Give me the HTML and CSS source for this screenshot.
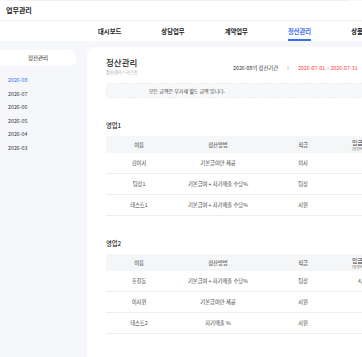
FILE: index.html
```html
<!DOCTYPE html>
<html>
<head>
<title>업무관리</title>
<link rel="stylesheet" href="styles.css">
</head>
<body>
    <div class="topline"></div>
    <div class="appbar">업무관리</div>
    <div class="tabs">
        <div class="tab"><span>대시보드</span></div>
        <div class="tab"><span>상담업무</span></div>
        <div class="tab"><span>계약업무</span></div>
        <div class="tab active"><span>정산관리</span></div>
        <div class="tab"><span>상품관리</span></div>
    </div>

    <div class="layout">
        <div class="sidebar">
            <div class="side-title">정산관리</div>
            <ul class="months">
                <li class="on">2026-08</li>
                <li>2026-07</li>
                <li>2026-06</li>
                <li>2026-05</li>
                <li>2026-04</li>
                <li>2026-03</li>
            </ul>
        </div>

        <div class="card">
            <div class="card-head">
                <div class="title-block">
                    <div class="title">정산관리</div>
                    <div class="crumb">정산관리 &gt; 리스트</div>
                </div>
                <div class="period">
                    2026-08의 정산기간
                    <span class="colon">:</span>
                    <span class="range">2026-07-01 ~ 2026-07-31</span>
                </div>
            </div>

            <div class="notice">모든 금액은 부가세 별도 금액 입니다.</div>

            <div class="group">
                <div class="group-name">영업1</div>
                <div class="row head">
                    <div>이름</div>
                    <div>정산방법</div>
                    <div>직급</div>
                    <div class="amt-head"><span>입금액</span><small>(일정비율)</small></div>
                </div>
                <div class="row">
                    <div>김이사</div>
                    <div>기본급여만 제공</div>
                    <div>이사</div>
                    <div class="amt"></div>
                </div>
                <div class="row">
                    <div>팀장1</div>
                    <div>기본급여 + 자기매출 수당%</div>
                    <div>팀장</div>
                    <div class="amt"></div>
                </div>
                <div class="row">
                    <div>테스트1</div>
                    <div>기본급여 + 자기매출 수당%</div>
                    <div>사원</div>
                    <div class="amt"></div>
                </div>
            </div>

            <div class="group">
                <div class="group-name">영업2</div>
                <div class="row head">
                    <div>이름</div>
                    <div>정산방법</div>
                    <div>직급</div>
                    <div class="amt-head"><span>입금액</span><small>(일정비율)</small></div>
                </div>
                <div class="row">
                    <div>홍길동</div>
                    <div>기본급여 + 자기매출 수당%</div>
                    <div>팀장</div>
                    <div class="amt">4,000,000</div>
                </div>
                <div class="row">
                    <div>이사원</div>
                    <div>기본급여만 제공</div>
                    <div>사원</div>
                    <div class="amt"></div>
                </div>
                <div class="row">
                    <div>테스트2</div>
                    <div>자기매출 %</div>
                    <div>사원</div>
                    <div class="amt"></div>
                </div>
            </div>
        </div>
    </div>
</body>
</html>
```

FILE: styles.css
```css
body {
    margin: 0;
    width: 460px;
    height: 357px;
    overflow: hidden;
    background-color: #f6f7fb;
    font-family: "Noto Sans CJK KR", "Noto Sans", sans-serif;
    color: #333;
}
.topline {
    height: 1px;
    margin-left: 18px;
    width: 329px;
    background-color: #eceef2;
}
.appbar {
    height: 19px;
    line-height: 19px;
    padding-left: 6px;
    font-size: 7px;
    font-weight: bold;
    color: #222;
    background-color: white;
    border-bottom: 1px solid #eef0f3;
}
.tabs {
    display: flex;
    height: 20px;
    padding-left: 78px;
    background-color: white;
}
.tab {
    flex: 0 0 63.3px;
    text-align: center;
    font-size: 6.3px;
    font-weight: bold;
    color: #222;
}
.tab span {
    display: inline-block;
    padding-top: 6px;
    line-height: 9px;
    padding-bottom: 3px;
    border-bottom: 2px solid transparent;
}
.tab.active {
    color: #3a6cf4;
}
.tab.active span {
    border-bottom-color: #3a6cf4;
}
.layout {
    display: flex;
}
.sidebar {
    flex: 0 0 87px;
    padding-top: 9px;
}
.side-title {
    width: 76px;
    height: 16px;
    line-height: 16px;
    background-color: white;
    border-radius: 0 6px 6px 0;
    text-align: center;
    font-size: 5.5px;
    color: #222;
}
.months {
    list-style: none;
    margin: 8px 0 0 0;
    padding: 0 0 0 8px;
}
.months li {
    height: 13.5px;
    line-height: 13.5px;
    font-size: 5.3px;
    color: #333;
}
.months li.on {
    color: #3a6cf4;
}
.card {
    flex: 1;
    margin-top: 6px;
    height: 400px;
    padding: 10px 0 0 19px;
    background-color: white;
    border-radius: 8px 0 0 0;
}
.card-head {
    display: flex;
}
.title-block {
    flex: 0 0 127px;
}
.title {
    font-size: 8.5px;
    line-height: 11px;
    font-weight: 500;
    color: #1e1e1e;
}
.crumb {
    margin-top: 1px;
    font-size: 4.3px;
    line-height: 6px;
    color: #999;
}
.period {
    padding-top: 7px;
    font-size: 5.3px;
    line-height: 8px;
    color: #333;
}
.colon {
    margin: 0 8px;
}
.range {
    color: #ff3d3d;
}
.notice {
    margin-top: 8px;
    height: 13px;
    line-height: 13px;
    padding-left: 42px;
    font-size: 5px;
    color: #444;
    background-color: #f7f8fa;
    border: 1px dashed #eceef1;
    border-right: none;
    border-radius: 4px 0 0 4px;
}
.group {
    padding-top: 23px;
}
.group-name {
    height: 9px;
    line-height: 9px;
    margin-bottom: 6px;
    font-size: 6.3px;
    font-weight: 500;
    color: #222;
}
.row {
    display: grid;
    grid-template-columns: 66px 92px 78px 60px;
    align-items: center;
    height: 21px;
    box-sizing: border-box;
    border-bottom: 1px solid #eceef1;
    font-size: 5.3px;
    color: #444;
    text-align: center;
}
.row.head {
    height: 17px;
    border-bottom: none;
    background-color: #f5f6f8;
    color: #333;
}
.amt-head {
    display: flex;
    flex-direction: column;
    align-items: center;
    width: 36px;
}
.amt-head span {
    font-size: 5.8px;
    line-height: 7px;
}
.amt-head small {
    margin-top: 1px;
    font-size: 3.8px;
    line-height: 4px;
    color: #666;
}
.amt {
    text-align: left;
    padding-left: 16px;
}
```
